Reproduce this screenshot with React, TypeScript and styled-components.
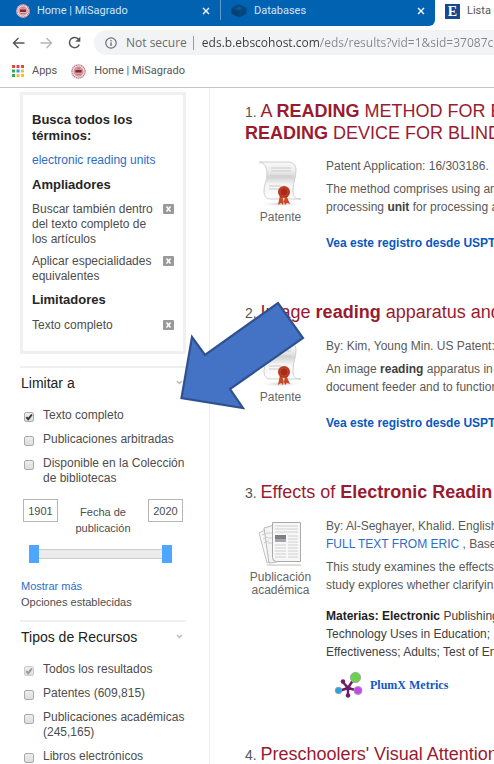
import React, { useState } from 'react';
import styled, { createGlobalStyle } from 'styled-components';

const GlobalStyle = createGlobalStyle`
  *, *::before, *::after { box-sizing: border-box; }
  html { scrollbar-width: none; }
  body {
    margin: 0;
    background: #fff;
    color: #4d4d4d;
    font: 12px/15px "Liberation Sans", Arial, sans-serif;
    overflow-x: hidden;
  }
  h1, h2, h3, p, ul, ol, fieldset { margin: 0; padding: 0; border: 0; }
  ul, ol { list-style: none; }
  a { color: #2a6ec6; text-decoration: none; }
  button, input { font: inherit; color: inherit; margin: 0; }
  button { padding: 0; border: 0; background: none; cursor: pointer; }
`;

const labelFont = 'Roboto, "Noto Sans", sans-serif';
const addressFont = '"Open Sans", "Noto Sans", sans-serif';

const Page = styled.div`
  position: relative;
  height: 100vh;
  display: flex;
  flex-direction: column;
  overflow: hidden;
`;

const TabStrip = styled.nav`
  display: flex;
  flex: none;
  height: 26px;
  background: #fff;
  font: 11px/16px ${labelFont};
  overflow: hidden;
`;

const Tab = styled.div<{ $active?: boolean; $last?: boolean }>`
  display: flex;
  align-items: center;
  flex: none;
  gap: 7px;
  width: ${p => (p.$last ? 214 : 220)}px;
  padding: 0 10px 4px ${p => (p.$last || p.$active ? 10 : 16)}px;
  background: ${p => (p.$active ? '#fff' : '#0262b2')};
  color: ${p => (p.$active ? '#555' : '#d3e5f5')};
  border-radius: ${p => (p.$last ? '0 0 6px 0' : '0')};
  a { color: inherit; flex: 1; white-space: nowrap; }
  svg { flex: none; }
`;

const TabClose = styled.button`
  display: flex;
  color: #fff;
`;

const TabDivider = styled.div`
  flex: none;
  width: 1px;
  height: 26px;
  background: linear-gradient(#5d9bd0 20px, #0262b2 20px);
`;

const Toolbar = styled.div`
  display: flex;
  align-items: center;
  flex: none;
  height: 33px;
  padding-left: 10px;
  color: #555;
`;

const NavButton = styled.button<{ $dim?: boolean }>`
  display: flex;
  justify-content: center;
  width: 16px;
  margin-right: 12px;
  color: ${p => (p.$dim ? '#b5b5b5' : '#555')};
`;

const Omnibox = styled.form`
  display: flex;
  align-items: center;
  flex: 1;
  min-width: 0;
  height: 25px;
  padding-left: 11px;
  border-radius: 13px 0 0 13px;
  background: #f1f3f4;
  color: #6a6d70;
  font: 12px/18px ${addressFont};
`;

const Security = styled.button`
  display: flex;
  align-items: center;
  gap: 9px;
  flex: none;
  padding-right: 6px;
  border-right: 1px solid #999;
  line-height: 14px;
  white-space: nowrap;
`;

const Address = styled.input`
  flex: 1;
  min-width: 0;
  margin-left: 8px;
  padding: 0;
  border: 0;
  outline: 0;
  color: transparent;
  caret-color: #333;
  background: linear-gradient(to right, #3a3b3d 118px, #83878b 118px);
  background-clip: text;
  -webkit-background-clip: text;
`;

const Bookmarks = styled.nav`
  display: flex;
  align-items: center;
  flex: none;
  gap: 14px;
  height: 29px;
  padding: 0 12px 4px;
  border-bottom: 1px solid #c4c4c4;
  font: 11px/16px ${labelFont};
`;

const Bookmark = styled.a`
  display: flex;
  align-items: center;
  gap: 8px;
  color: #555;
  white-space: nowrap;
`;

const Content = styled.div`
  display: flex;
  flex: 1;
  min-height: 0;
`;

const Sidebar = styled.aside`
  flex: none;
  width: 210px;
  padding: 4px 23px 0 20px;
  border-right: 1px solid #eee;
`;

const SearchBox = styled.section`
  padding: 17px 9px 18px;
  border: 3px solid #f0f0f0;
  h2 {
    font-size: 13px;
    line-height: 16px;
    color: #262626;
  }
  h2 + ul { margin: 9px 0 8px; }
  h2:last-of-type + ul { margin: 10px 0 0; }
`;

const TermLink = styled.a`
  display: block;
  margin: 8px 0 9px;
  line-height: 16px;
`;

const Applied = styled.li`
  display: flex;
  justify-content: space-between;
  align-items: flex-start;
  & + & { margin-top: 7px; }
  span { max-width: 124px; }
`;

const Remove = styled.button`
  display: flex;
  align-items: center;
  justify-content: center;
  flex: none;
  width: 11px;
  height: 10px;
  margin-top: 2px;
  border-radius: 1px;
  background: #999;
`;

const Facet = styled.section`
  margin-top: 12px;
  border-top: 2px solid #f0f0f0;
`;

const FacetHead = styled.div`
  display: flex;
  justify-content: space-between;
  padding: 6px 3px 0 1px;
  h2 {
    font-size: 14px;
    line-height: 18px;
    font-weight: 400;
    color: #222;
  }
  button { height: 12px; }
`;

const Options = styled.ul`
  display: flex;
  flex-direction: column;
  gap: 9px;
  margin-top: 16px;
  padding-left: 4px;
`;

const Option = styled.label`
  display: flex;
  align-items: flex-start;
  gap: 9px;
  margin-right: -6px;
`;

const CheckCell = styled.span`
  display: grid;
  flex: none;
  margin-top: 4px;
  > * { grid-area: 1 / 1; }
  svg { pointer-events: none; }
`;

const Check = styled.input`
  appearance: none;
  width: 10px;
  height: 10px;
  border: 1px solid #aaa;
  border-radius: 2px;
  background: linear-gradient(#eee, #dcdcdc);
  &:disabled { border-color: #ccc; }
`;

const Dates = styled.div`
  display: flex;
  justify-content: space-between;
  margin: 13px 3px 0;
  font-size: 11px;
  line-height: 16px;
  text-align: center;
  label { padding-top: 5px; width: 70px; }
`;

const Year = styled.input`
  width: 35px;
  height: 23px;
  padding: 0;
  border: 1px solid #b5b5b5;
  text-align: center;
`;

const Range = styled.div`
  display: grid;
  align-items: center;
  height: 18px;
  margin: 9px 14px 0 9px;
  > * { grid-area: 1 / 1; }
`;

const Track = styled.div`
  height: 10px;
  border: solid #ccc;
  border-width: 1px 0;
  background: #ececec;
`;

const Thumb = styled.input`
  appearance: none;
  width: 100%;
  min-width: 0;
  height: 18px;
  background: none;
  pointer-events: none;
  &::-webkit-slider-thumb {
    appearance: none;
    width: 10px;
    height: 18px;
    background: #4da6ff;
    pointer-events: auto;
  }
`;

const More = styled.div`
  display: flex;
  flex-direction: column;
  align-items: flex-start;
  margin: 15px 0 -2px 1px;
  font-size: 11px;
  line-height: 16px;
`;

const Results = styled.main`
  flex: 1;
  min-width: 0;
  padding: 13px 0 0 35px;
  overflow: hidden;
  white-space: nowrap;
  color: #595959;
  line-height: 18px;
`;

const Result = styled.li`
  margin-bottom: 50px;
  &:nth-child(3) { margin-bottom: 45px; }
`;

const Title = styled.h2`
  font-size: 18px;
  line-height: 21px;
  font-weight: 400;
  a { color: #991b2f; }
  span { font-size: 14px; color: #555; }
`;

const Record = styled.div`
  display: flex;
  gap: 10px;
  margin-top: 13px;
`;

const Kind = styled.div`
  display: flex;
  flex-direction: column;
  align-items: center;
  flex: none;
  width: 71px;
  padding-top: 4px;
  line-height: 13px;
  text-align: center;
  white-space: normal;
  color: #666;
  svg { margin-bottom: 4px; }
`;

const Body = styled.div`
  b { color: #404040; }
`;

const Abstract = styled.p`
  margin-top: 5px;
`;

const FullRecord = styled.a`
  display: block;
  margin-top: 18px;
  font-weight: 700;
  color: #0b57c0;
`;

const Subjects = styled.p`
  margin-top: 13px;
  color: #404040;
  && b { color: #1f1f1f; }
`;

const Plum = styled.a`
  display: flex;
  align-items: center;
  gap: 7px;
  margin: 10px 0 0 8px;
  font: bold 12px/16px "Liberation Serif", "Times New Roman", serif;
  color: #1258c4;
`;

const Pointer = styled.svg`
  position: absolute;
  left: 178px;
  top: 298px;
  pointer-events: none;
`;

function Seal({ size }: { size: number }) {
  return (
    <svg width={size} height={size} viewBox="0 0 14 14" aria-hidden="true">
      <circle cx="7" cy="7" r="6.8" fill="#f1dfe2" />
      <circle cx="7" cy="7" r="6.1" fill="none" stroke="#b9707b" strokeWidth="1.1" strokeDasharray="1.2 .6" />
      <circle cx="7" cy="7" r="4.2" fill="#dcb4ba" stroke="#bd7882" strokeWidth=".7" />
      <path d="M4 5.4h6v2.6H4z" fill="#8f2435" />
      <path d="M4.6 9.5h4.8M5.4 4h3.2" stroke="#b4606d" strokeWidth=".8" />
    </svg>
  );
}

function CrossIcon() {
  return (
    <svg width="8" height="8" viewBox="0 0 8 8" aria-hidden="true">
      <path d="M1 1l6 6M7 1L1 7" stroke="currentColor" strokeWidth="1.4" />
    </svg>
  );
}

function CubeIcon() {
  return (
    <svg width="16" height="16" viewBox="0 0 16 16" aria-hidden="true">
      <path d="M8 1l7.5 4L8 9.200.5 5z" fill="#05497f" />
      <path d="M.5 5L8 9.200v5.300L.5 10.800z" fill="#063f70" />
      <path d="M15.500 5L8 9.200v5.300l7.500-3.700z" fill="#04467d" />
      <path d="M8 3.500l3.500 1.700L8 7 4.500 5.200z" fill="#0b5da1" />
    </svg>
  );
}

const EBadge = styled.span`
  display: flex;
  align-items: center;
  justify-content: center;
  flex: none;
  width: 15px;
  height: 15px;
  background: #174a8b;
  color: #fff;
  font: bold 14px/15px "Liberation Serif", serif;
`;

function AppsIcon() {
  const colours = ['#e5493d', '#e5493d', '#e5493d', '#3aa757', '#3d8bf0', '#fbbc2d', '#3aa757', '#fbbc2d', '#fbbc2d'];
  return (
    <svg width="12" height="12" viewBox="0 0 12 12" aria-hidden="true">
      {colours.map((c, i) => (
        <rect key={i} x={(i % 3) * 4.5} y={Math.floor(i / 3) * 4.5} width="3" height="3" fill={c} />
      ))}
    </svg>
  );
}

function PatentIcon() {
  return (
    <svg width="46" height="46" viewBox="0 0 46 46" aria-hidden="true">
      <defs>
        <linearGradient id="scroll" x1="0" y1="0" x2="0" y2="1">
          <stop offset="0" stopColor="#f8f8f8" />
          <stop offset=".25" stopColor="#ededed" />
          <stop offset=".42" stopColor="#d4d4d4" />
          <stop offset=".6" stopColor="#f4f4f4" />
          <stop offset="1" stopColor="#fdfdfd" />
        </linearGradient>
        <radialGradient id="floor">
          <stop offset="0" stopColor="#c8c8c8" />
          <stop offset="1" stopColor="#fff" stopOpacity="0" />
        </radialGradient>
      </defs>
      <ellipse cx="23" cy="43" rx="22" ry="3" fill="url(#floor)" />
      <path d="M1 1h29c5 0 8 3 8 8 0 8-3 12-3 20 0 6 1 9 8 9H13c-5 0-7-3-7-8 0-7 3-10 3-17C9 6 7 2 1 1z" fill="url(#scroll)" stroke="#cfcfcf" />
      <path d="M13 7h20M13 10h20M12 15h21M11 25h12M11 28h10" stroke="#cbcbcb" strokeWidth="1" />
      <path d="M22 34l-2 10 3-2 2 2 2-8zM28 34l4 9-3-1-2 2-3-9z" fill="#c94a24" />
      <circle cx="26" cy="31" r="6" fill="#bd351f" />
      <circle cx="26" cy="31" r="4" fill="#a82a1b" stroke="#c9502e" strokeWidth=".7" />
    </svg>
  );
}

function JournalIcon() {
  return (
    <svg width="46" height="46" viewBox="0 0 46 46" aria-hidden="true">
      <path d="M8 43h34l2 2H10z" fill="#ddd" />
      <path d="M1 12l10-5 8 32-10 3z" fill="#f7f7f7" stroke="#c2c2c2" />
      <path d="M6 7l10-3 3 37-8 1z" fill="#f4f4f4" stroke="#b8b8b8" />
      <path d="M4 14l5-2M5 18l5-2M6 22l5-2M9 12h5M10 17h4M10 22h4" stroke="#ccc" />
      <path d="M14.500 1.500h28v39h-24q-4 0-4-4z" fill="#f7f7f7" stroke="#a9a9a9" />
      <path d="M17 5h23M17 8h23M17 11h23M30 15h10M30 18h10M30 21h10M17 24h11M17 27h11M17 30h11M17 33h11M17 36h11M30 24h10M30 27h10M30 30h10M30 33h10M30 36h10" stroke="#d0d0d0" />
      <path d="M17 14h11v7H17z" fill="#7d8186" />
      <path d="M17 18h11v3H17z" fill="#a5a9ad" />
    </svg>
  );
}

function PlumIcon() {
  return (
    <svg width="29" height="28" viewBox="0 0 29 28" aria-hidden="true">
      <path d="M14 17L21 6M14 17L8 10M14 17l-9 3M14 17l11 3M14 17v8" stroke="#6d1d66" strokeWidth="2.400" />
      <circle cx="9" cy="10.500" r="2.200" fill="#6d1d66" />
      <circle cx="14" cy="24.500" r="2.200" fill="#6d1d66" />
      <circle cx="14" cy="17" r="2.500" fill="#6d1d66" />
      <circle cx="21.500" cy="6.500" r="5.200" fill="#68d34b" stroke="#aaa" />
      <circle cx="4.500" cy="19.500" r="3.200" fill="#24a4ea" stroke="#999" />
      <circle cx="24" cy="19.500" r="4" fill="#c445f4" stroke="#a9a" />
    </svg>
  );
}

function AppliedItem({ children }: { children: string }) {
  return (
    <Applied>
      <span>{children}</span>
      <Remove aria-label={`Quitar ${children}`}>
        <svg width="7" height="6" viewBox="0 0 7 6" aria-hidden="true">
          <path d="M1.500 .5l4 5M5.500 .5l-4 5" stroke="#fff" strokeWidth="1.500" />
        </svg>
      </Remove>
    </Applied>
  );
}

function CheckOption({ label, initial = false, disabled = false }: { label: string; initial?: boolean; disabled?: boolean }) {
  const [on, setOn] = useState(initial);
  return (
    <li>
      <Option>
        <CheckCell>
          <Check type="checkbox" checked={on} disabled={disabled} onChange={e => setOn(e.target.checked)} />
          {on && (
            <svg width="10" height="10" viewBox="0 0 10 10" aria-hidden="true">
              <path d="M2.300 5.200l1.900 2L7.900 2.500" fill="none" stroke={disabled ? '#999' : '#333'} strokeWidth="1.900" />
            </svg>
          )}
        </CheckCell>
        <span>{label}</span>
      </Option>
    </li>
  );
}

function FacetTitle({ children }: { children: string }) {
  return (
    <FacetHead>
      <h2>{children}</h2>
      <button aria-label={`Contraer ${children}`}>
        <svg width="7" height="5" viewBox="0 0 7 5" aria-hidden="true">
          <path d="M1 1l2.500 2.500L6 1" fill="none" stroke="#bbb" strokeWidth="1.500" />
        </svg>
      </button>
    </FacetHead>
  );
}

export default function App() {
  const [from, setFrom] = useState('1901');
  const [to, setTo] = useState('2020');
  return (
    <>
      <GlobalStyle />
      <Page>
        <TabStrip>
          <Tab>
            <Seal size={14} />
            <a href="#home">Home | MiSagrado</a>
            <TabClose aria-label="Close Home"><CrossIcon /></TabClose>
          </Tab>
          <TabDivider />
          <Tab $last>
            <CubeIcon />
            <a href="#databases">Databases</a>
            <TabClose aria-label="Close Databases"><CrossIcon /></TabClose>
          </Tab>
          <Tab $active>
            <EBadge aria-hidden="true">E</EBadge>
            <a href="#results">Lista d</a>
          </Tab>
        </TabStrip>

        <Toolbar>
          <NavButton aria-label="Back">
            <svg width="13" height="12" viewBox="0 0 13 12"><path d="M12.500 6H1.500M6.500 1L1.500 6l5 5" fill="none" stroke="currentColor" strokeWidth="1.400" /></svg>
          </NavButton>
          <NavButton $dim aria-label="Forward">
            <svg width="13" height="12" viewBox="0 0 13 12"><path d="M.5 6h11M6.500 1l5 5-5 5" fill="none" stroke="currentColor" strokeWidth="1.400" /></svg>
          </NavButton>
          <NavButton aria-label="Reload">
            <svg width="13" height="13" viewBox="0 0 13 13">
              <path d="M11.300 8.400A5.100 5.100 0 1 1 10.300 3.100L11.500 4.300" fill="none" stroke="currentColor" strokeWidth="1.500" />
              <path d="M12.300.7v5H7.300z" fill="currentColor" />
            </svg>
          </NavButton>
          <Omnibox>
            <Security type="button">
              <svg width="12" height="12" viewBox="0 0 12 12" aria-hidden="true">
                <circle cx="6" cy="6" r="5.200" fill="none" stroke="currentColor" strokeWidth="1.200" />
                <path d="M6 5.200V9M6 3v1.300" stroke="currentColor" strokeWidth="1.300" />
              </svg>
              Not secure
            </Security>
            <Address aria-label="Address" defaultValue="eds.b.ebscohost.com/eds/results?vid=1&sid=37087c" />
          </Omnibox>
        </Toolbar>

        <Bookmarks>
          <Bookmark href="#apps"><AppsIcon />Apps</Bookmark>
          <Bookmark href="#misagrado"><Seal size={15} />Home | MiSagrado</Bookmark>
        </Bookmarks>

        <Content>
          <Sidebar>
            <SearchBox>
              <h2>Busca todos los términos:</h2>
              <TermLink href="#term">electronic reading units</TermLink>
              <h2>Ampliadores</h2>
              <ul>
                <AppliedItem>Buscar también dentro del texto completo de los artículos</AppliedItem>
                <AppliedItem>Aplicar especialidades equivalentes</AppliedItem>
              </ul>
              <h2>Limitadores</h2>
              <ul>
                <AppliedItem>Texto completo</AppliedItem>
              </ul>
            </SearchBox>

            <Facet>
              <FacetTitle>Limitar a</FacetTitle>
              <Options>
                <CheckOption label="Texto completo" initial />
                <CheckOption label="Publicaciones arbitradas" />
                <CheckOption label="Disponible en la Colección de bibliotecas" />
              </Options>
              <Dates>
                <Year id="from" aria-label="Desde" value={from} onChange={e => setFrom(e.target.value)} />
                <label htmlFor="from">Fecha de publicación</label>
                <Year aria-label="Hasta" value={to} onChange={e => setTo(e.target.value)} />
              </Dates>
              <Range>
                <Track />
                <Thumb type="range" min="1901" max="2020" aria-label="Año inicial" value={from} onChange={e => setFrom(e.target.value)} />
                <Thumb type="range" min="1901" max="2020" aria-label="Año final" value={to} onChange={e => setTo(e.target.value)} />
              </Range>
              <More>
                <a href="#more">Mostrar más</a>
                <span>Opciones establecidas</span>
              </More>
            </Facet>

            <Facet>
              <FacetTitle>Tipos de Recursos</FacetTitle>
              <Options>
                <CheckOption label="Todos los resultados" initial disabled />
                <CheckOption label="Patentes (609,815)" />
                <CheckOption label="Publicaciones académicas (245,165)" />
                <CheckOption label="Libros electrónicos" />
              </Options>
            </Facet>
          </Sidebar>

          <Results>
            <ol>
              <Result>
                <Title>
                  <span>1. </span>
                  <a href="#r1">A <b>READING</b> METHOD FOR B<br /><b>READING</b> DEVICE FOR BLIND</a>
                </Title>
                <Record>
                  <Kind><PatentIcon />Patente</Kind>
                  <Body>
                    <p>Patent Application: 16/303186.</p>
                    <Abstract>The method comprises using an<br />processing <b>unit</b> for processing a</Abstract>
                    <FullRecord href="#uspto1">Vea este registro desde USPT</FullRecord>
                  </Body>
                </Record>
              </Result>
              <Result>
                <Title>
                  <span>2. </span>
                  <a href="#r2">Image <b>reading</b> apparatus and</a>
                </Title>
                <Record>
                  <Kind><PatentIcon />Patente</Kind>
                  <Body>
                    <p>By: Kim, Young Min. US Patent:</p>
                    <Abstract>An image <b>reading</b> apparatus in<br />document feeder and to function</Abstract>
                    <FullRecord href="#uspto2">Vea este registro desde USPT</FullRecord>
                  </Body>
                </Record>
              </Result>
              <Result>
                <Title>
                  <span>3. </span>
                  <a href="#r3">Effects of <b>Electronic Readin</b></a>
                </Title>
                <Record>
                  <Kind><JournalIcon />Publicación académica</Kind>
                  <Body>
                    <p>By: Al-Seghayer, Khalid. English<br /><a href="#eric">FULL TEXT FROM ERIC</a> , Base</p>
                    <Abstract>This study examines the effects<br />study explores whether clarifyin</Abstract>
                    <Subjects><b>Materias: Electronic</b> Publishing<br />Technology Uses in Education;<br />Effectiveness; Adults; Test of En</Subjects>
                    <Plum href="#plumx"><PlumIcon />PlumX Metrics</Plum>
                  </Body>
                </Record>
              </Result>
              <Result>
                <Title>
                  <span>4. </span>
                  <a href="#r4">Preschoolers' Visual Attention</a>
                </Title>
              </Result>
            </ol>
          </Results>
        </Content>

        <Pointer width="128" height="114" viewBox="178 298 128 114" aria-hidden="true">
          <path d="M181.500 398L192 337l13 18 73-52 25 35-73 51 13 19z" fill="#4472c4" stroke="#2f528f" strokeWidth="2.200" />
        </Pointer>
      </Page>
    </>
  );
}
